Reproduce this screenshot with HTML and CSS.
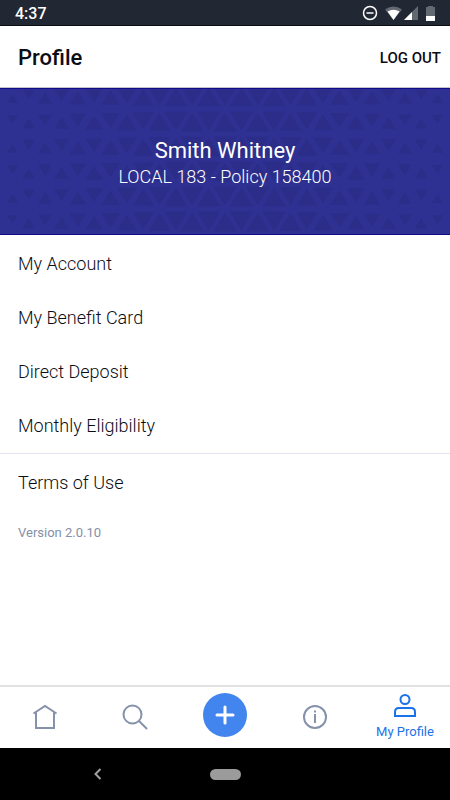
FILE: index.html
```html
<!DOCTYPE html>
<html lang="en">
<head>
  <meta charset="UTF-8">
  <meta name="viewport" content="width=device-width, initial-scale=1.0">
  <title>Profile</title>
  <link rel="stylesheet" href="styles.css">
</head>
<body>
  <div class="status-bar">
    <span class="time">4:37</span>
    <svg class="status-icons" width="76" height="18" viewBox="0 0 76 18" aria-hidden="true">
      <circle cx="8" cy="8" r="6.500" fill="none" stroke="#fff" stroke-width="1.5"/>
      <path d="M4.500 8h7" stroke="#fff" stroke-width="1.5"/>
      <path d="M23 4.500Q31.500 -1.500 40 4.500L31.500 15z" fill="#646871"/>
      <path d="M25.500 6.500Q31.500 3 37.500 6.500L31.500 15z" fill="#fff"/>
      <path d="M42 15L56 1v14z" fill="#646871"/>
      <path d="M42 15L50 7v8z" fill="#fff"/>
      <path d="M64 2h2V1h5v1h2v9h-9z" fill="#646871"/>
      <path d="M64 11h9v5h-9z" fill="#fff"/>
    </svg>
  </div>

  <header class="header">
    <h1>Profile</h1>
    <button type="button" class="logout">LOG OUT</button>
  </header>

  <main>
    <section class="banner">
      <svg class="banner-pattern" viewBox="0 0 450 147" preserveAspectRatio="xMidYMid slice" aria-hidden="true">
        <path id="triangles"/>
      </svg>
      <h2>Smith Whitney</h2>
      <p>LOCAL 183 - Policy 158400</p>
    </section>

    <nav class="menu">
      <a href="#account">My Account</a>
      <a href="#card">My Benefit Card</a>
      <a href="#deposit">Direct Deposit</a>
      <a href="#eligibility">Monthly Eligibility</a>
    </nav>
    <nav class="menu menu-legal">
      <a href="#terms">Terms of Use</a>
    </nav>
    <p class="version">Version 2.0.10</p>
  </main>

  <nav class="tab-bar">
    <a href="#home" class="tab" aria-label="Home">
      <svg width="26" height="26" viewBox="0 0 26 26">
        <path d="M1.500 9.500L13 2l11.500 7.500M4 8.500V24h18V8.500"/>
      </svg>
    </a>
    <a href="#search" class="tab" aria-label="Search">
      <svg width="26" height="26" viewBox="0 0 26 26">
        <circle cx="10.500" cy="10.500" r="9"/>
        <path d="M17 17l8 8"/>
      </svg>
    </a>
    <button type="button" class="tab add-tab" aria-label="Add">
      <span class="add-circle">
        <svg width="20" height="20" viewBox="0 0 20 20">
          <path d="M10 2v16M2 10h16"/>
        </svg>
      </span>
    </button>
    <a href="#info" class="tab" aria-label="Information">
      <svg width="26" height="26" viewBox="0 0 26 26">
        <circle cx="13" cy="13" r="11"/>
        <path d="M13 10v9M13 6.500v2"/>
      </svg>
    </a>
    <a href="#profile" class="tab active">
      <svg width="26" height="26" viewBox="0 0 26 26">
        <circle cx="13" cy="6.500" r="4.500"/>
        <path d="M3 23v-4q0-4 4-4h12q4 0 4 4v4z"/>
      </svg>
      <span>My Profile</span>
    </a>
  </nav>

  <div class="system-nav">
    <button type="button" class="system-back" aria-label="Back">
      <svg width="10" height="12" viewBox="0 0 10 12">
        <path d="M7.500 1L2.500 6l5 5"/>
      </svg>
    </button>
    <button type="button" class="system-home" aria-label="Home screen"></button>
  </div>

  <script src="script.js"></script>
</body>
</html>
```
FILE: styles.css
```css
* {
  box-sizing: border-box;
}

body {
  display: flex;
  flex-direction: column;
  min-height: 100vh;
  margin: 0;
  background-color: #fff;
  color: #0b0d14;
  font-family: Roboto, sans-serif;
}

h1, h2, p {
  margin: 0;
  font-weight: 400;
}

a {
  color: inherit;
  text-decoration: none;
}

button {
  padding: 0;
  border: none;
  background: none;
  color: inherit;
  font-family: inherit;
  cursor: pointer;
}

svg {
  display: block;
}

/* Status bar */
.status-bar {
  display: flex;
  align-items: center;
  justify-content: space-between;
  height: 26px;
  padding: 2px 12px 0 15px;
  border-bottom: 1px solid #0b0d14;
  background-color: #212733;
  color: #fff;
}

.time {
  font-size: 16px;
  font-weight: 500;
}

/* Header */
.header {
  display: flex;
  align-items: center;
  justify-content: space-between;
  height: 62px;
  padding: 2px 9px 0 18px;
  border-bottom: 1px solid #c4c4cc;
}

.header h1 {
  font-size: 22px;
  font-weight: 500;
}

.logout {
  font-size: 15px;
  font-weight: 500;
}

/* Banner */
.banner {
  position: relative;
  display: flex;
  flex-direction: column;
  align-items: center;
  justify-content: center;
  height: 147px;
  padding-top: 2px;
  border-top: 1px solid #120a8c;
  border-bottom: 1px solid #120a8c;
  background-color: #2e3192;
  color: #fff;
}

.banner-pattern {
  position: absolute;
  inset: 0;
  width: 100%;
  height: 100%;
  fill: #2b2d88;
}

.banner h2,
.banner p {
  position: relative;
}

.banner h2 {
  font-size: 22px;
  line-height: 28px;
}

.banner p {
  font-size: 18px;
  font-weight: 350;
  line-height: 24px;
}

/* Menu */
.menu {
  padding-top: 2px;
}

.menu a {
  display: block;
  padding: 15px 18px;
  font-size: 18px;
  font-weight: 350;
  line-height: 24px;
}

.menu-legal {
  border-top: 1px solid #e2e4f0;
}

.version {
  padding: 13px 18px;
  color: #8490a8;
  font-size: 13px;
  line-height: 20px;
}

/* Tab bar */
.tab-bar {
  display: grid;
  grid-template-columns: repeat(5, 1fr);
  height: 63px;
  margin-top: auto;
  padding-bottom: 1px;
  border-top: 2px solid #e2e2e2;
}

.tab {
  display: flex;
  flex-direction: column;
  align-items: center;
  justify-content: center;
  color: #8592aa;
}

.tab svg {
  fill: none;
  stroke: currentColor;
  stroke-width: 2;
}

.add-tab {
  padding-bottom: 5px;
}

.add-circle {
  display: grid;
  place-items: center;
  width: 44px;
  height: 44px;
  border-radius: 50%;
  background-color: #4285ee;
  color: #fff;
}

.add-circle svg {
  stroke-width: 3;
  stroke-linecap: round;
}

.tab.active {
  gap: 4px;
  color: #1a73e8;
  font-size: 13px;
  line-height: 18px;
}

/* System navigation */
.system-nav {
  display: grid;
  grid-template-columns: 195px 60px 195px;
  align-items: center;
  justify-content: center;
  height: 52px;
  background-color: #000;
}

.system-back {
  justify-self: center;
}

.system-back svg {
  fill: none;
  stroke: #a0a0a0;
  stroke-width: 2;
}

.system-home {
  justify-self: center;
  width: 31px;
  height: 11px;
  border-radius: 6px;
  background-color: #9b9b9b;
}
```
FILE: script.js
```js
// Rows of alternating triangles that grow towards the middle of the banner
const columns = 27;
const rows = 6;
const middle = (columns - 1) / 2;
let d = '';

for (let row = 0; row < rows; row++) {
  for (let col = 0; col < columns; col++) {
    const up = (row + col) % 2 === 0;
    const half = Math.min(11.5, 5.5 + 0.6 * (middle - Math.abs(col - middle)));
    const height = half * 1.6;
    const x = 225 + (col - middle) * 16.35;
    const y = row * 25 + (up ? 12 : 5);
    const base = up ? y + height / 3 : y - height / 3;
    const tip = up ? base - height : base + height;
    d += `M${x - half} ${base}H${x + half}L${x} ${tip}Z`;
  }
}

document.getElementById('triangles').setAttribute('d', d);
```
